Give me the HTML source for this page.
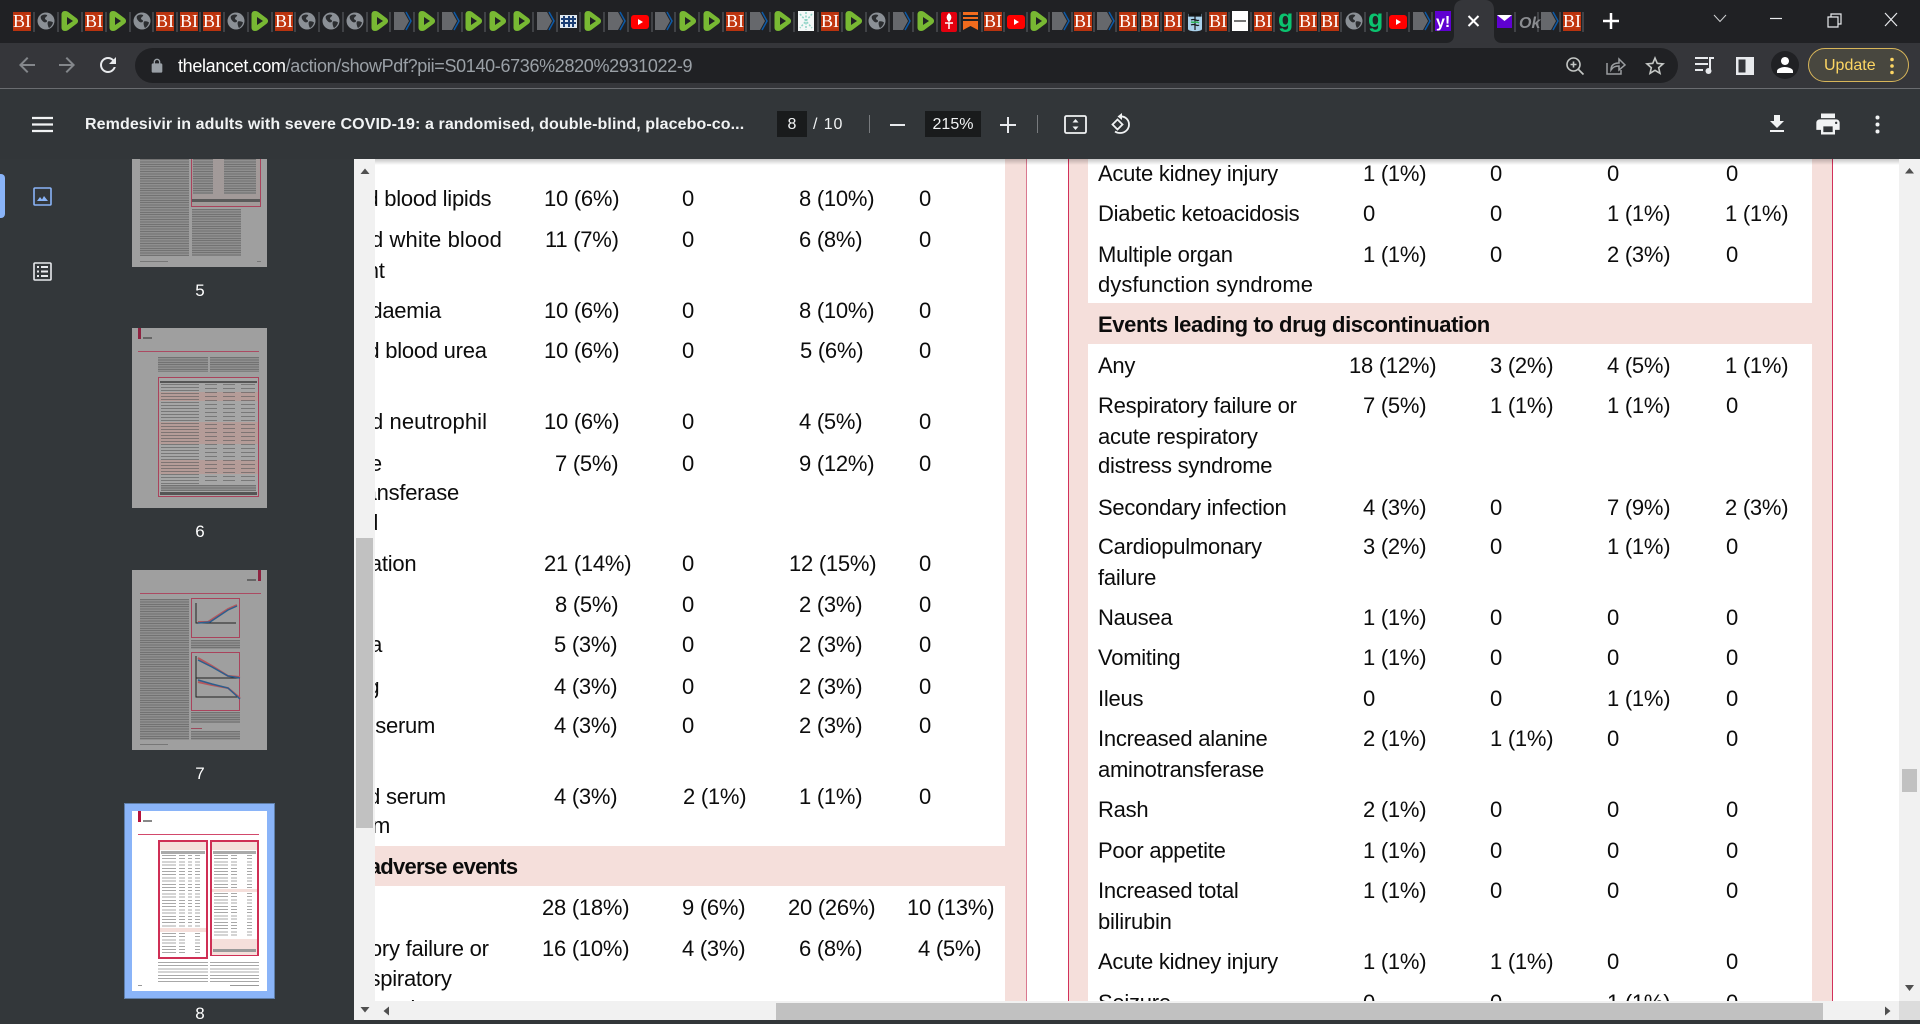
<!DOCTYPE html>
<html><head><meta charset="utf-8"><title>Remdesivir</title>
<style>
html,body{margin:0;padding:0;width:1920px;height:1020px;overflow:hidden;background:#323639;font-family:"Liberation Sans",sans-serif}
#tabs{position:absolute;left:0;top:0;width:1920px;height:43px;background:#202124}
#bar{position:absolute;left:0;top:43px;width:1920px;height:45px;background:#35363a}
#addr{position:absolute;left:135px;top:48px;width:1543px;height:35px;border-radius:18px;background:#202124}
#sep{position:absolute;left:0;top:88px;width:1920px;height:1px;background:#6a6c70}
#pdfbar{position:absolute;left:0;top:89px;width:1920px;height:70px;background:#323639}
.B{position:absolute;top:12px;width:18px;height:19px;background:#c0360f;color:#fff;font:18px/19px "Liberation Serif",serif;text-align:center;font-style:normal;overflow:hidden;box-shadow:inset 0 2px #b8330f,inset 0 -2px #b8330f}
.abs{position:absolute;white-space:nowrap}
svg.i{position:absolute;overflow:visible}
#side{position:absolute;left:0;top:159px;width:354px;height:861px;background:#33373a}
.pg{position:absolute;left:132px;width:135px;background:#9f9f9f;overflow:hidden}
.pg>*{filter:blur(.35px)}
.n{position:absolute;width:40px;left:180px;text-align:center;color:#fff;font-size:17px;line-height:20px}
.l{position:absolute;background:repeating-linear-gradient(#727272 0 1px,#8f8f8f 1px 2.4px)}
.w .l{background:repeating-linear-gradient(#a8a8a8 0 1px,rgba(255,255,255,0) 1px 3.2px)}
.tb{position:absolute;border:1.5px solid #a9435c;box-sizing:border-box}
.w .tb{border:2px solid #cf2f55}
.pk{position:absolute;left:0;right:0;background:#b59c98}
.w .pk{background:#f5dfdb}
.pl{position:absolute;height:1px;background:#ab4a62}
.w .pl{background:#d2496b}
.bar{position:absolute;width:3px;height:11px;background:#8e2340}
.w .bar{background:#b5123c}
#main{position:absolute;left:0;top:0;width:1920px;height:1020px;clip-path:inset(159px 21px 19px 375px);background:#fff}
.r{position:absolute;left:0;top:0;margin-top:1px;width:1920px;height:30px;font-size:22px;line-height:30px;letter-spacing:-.25px;color:#0c0c0c}
.r span{position:absolute;white-space:nowrap}
.r b{position:absolute;white-space:nowrap;letter-spacing:-.45px}
.a{left:1363px}.b{left:1490px}.c{left:1607px}.d{left:1726px}
.e{left:544px}.f{left:682px}.g{left:799px}.h{left:919px}.lb{left:1098px}
.vs{position:absolute;background:#f1f1f1}
.th{position:absolute;background:#c1c1c1}
</style></head><body>

<div id="tabs"></div>
<i class="B" style="left:13px">BI</i><i class="B" style="left:85px">BI</i><i class="B" style="left:156px">BI</i><i class="B" style="left:180px">BI</i><i class="B" style="left:203px">BI</i><i class="B" style="left:275px">BI</i><i class="B" style="left:726px">BI</i><i class="B" style="left:821px">BI</i><i class="B" style="left:984px">BI</i><i class="B" style="left:1074px">BI</i><i class="B" style="left:1119px">BI</i><i class="B" style="left:1141px">BI</i><i class="B" style="left:1164px">BI</i><i class="B" style="left:1209px">BI</i><i class="B" style="left:1254px">BI</i><i class="B" style="left:1299px">BI</i><i class="B" style="left:1321px">BI</i><i class="B" style="left:1563px">BI</i>

<svg class="i" style="left:0;top:0" width="1920" height="43" viewBox="0 0 1920 43">
<defs>
<symbol id="dd" viewBox="0 0 18 20" width="18" height="20"><path d="M4 0C1.800 0 .5 1.400.5 3.500v13C.5 18.600 1.800 20 4 20c1.200 0 2.300-.4 3.400-1.100l8-6c2.200-1.600 2.200-4.200 0-5.800l-8-6C6.300.4 5.200 0 4 0z" fill="#78b833"/><path d="M6 6v8l6-4z" fill="#202124"/></symbol>
<symbol id="gl" viewBox="0 0 18 18" width="18" height="18"><circle cx="9" cy="9" r="8.500" fill="#8b9096"/><path d="M4 4c2-1.500 4-2 6-1 1 1-2 2-2 3.500 0 1.500 2 1 2 2.500S7.500 11 6 9.500 3 6 4 4zM11 9.500c2-.5 4 0 5 1-.5 2-2 4.500-4 5.500-1-1.500-2-5-1-6.500z" fill="#2b2d30"/></symbol>
<symbol id="ch" viewBox="0 0 18 20" width="18" height="20"><path d="M0 1h10l5 9-5 9H0z" fill="#66686c"/><path d="M12 1l5 9-5 9" fill="none" stroke="#0d5aa7" stroke-width="1.500"/></symbol>
<symbol id="yt" viewBox="0 0 18 14" width="18" height="14"><rect width="18" height="14" rx="3" fill="#f00"/><path d="M7 4v6l5-3z" fill="#fff"/></symbol>
</defs>
<path d="M34 12v20M58 12v20M82 12v20M106 12v20M130 12v20M153 12v20M177 12v20M200 12v20M224 12v20M248 12v20M272 12v20M295 12v20M319 12v20M343 12v20M367 12v20M390 12v20M414 12v20M438 12v20M462 12v20M485 12v20M509 12v20M533 12v20M557 12v20M580 12v20M604 12v20M628 12v20M652 12v20M675 12v20M699 12v20M723 12v20M746 12v20M770 12v20M794 12v20M818 12v20M842 12v20M866 12v20M889 12v20M913 12v20M937 12v20M960 12v20M982 12v20M1004 12v20M1027 12v20M1049 12v20M1072 12v20M1094 12v20M1116 12v20M1139 12v20M1161 12v20M1184 12v20M1206 12v20M1229 12v20M1251 12v20M1274 12v20M1297 12v20M1319 12v20M1341 12v20M1365 12v20M1387 12v20M1409 12v20M1432 12v20M1515 12v20M1538 12v20M1560 12v20M1583 12v20" stroke="#5f6368" stroke-width="1"/>
<use href="#gl" x="37" y="12"/><use href="#gl" x="133" y="12"/><use href="#gl" x="227" y="12"/><use href="#gl" x="298" y="12"/><use href="#gl" x="322" y="12"/><use href="#gl" x="346" y="12"/><use href="#gl" x="868" y="12"/><use href="#gl" x="1345" y="12"/>
<use href="#dd" x="61" y="11"/><use href="#dd" x="109" y="11"/><use href="#dd" x="251" y="11"/><use href="#dd" x="371" y="11"/><use href="#dd" x="418" y="11"/><use href="#dd" x="465" y="11"/><use href="#dd" x="489" y="11"/><use href="#dd" x="513" y="11"/><use href="#dd" x="584" y="11"/><use href="#dd" x="679" y="11"/><use href="#dd" x="703" y="11"/><use href="#dd" x="774" y="11"/><use href="#dd" x="845" y="11"/><use href="#dd" x="917" y="11"/><use href="#dd" x="1030" y="11"/>
<use href="#ch" x="394" y="11"/><use href="#ch" x="442" y="11"/><use href="#ch" x="537" y="11"/><use href="#ch" x="608" y="11"/><use href="#ch" x="655" y="11"/><use href="#ch" x="750" y="11"/><use href="#ch" x="893" y="11"/><use href="#ch" x="1052" y="11"/><use href="#ch" x="1097" y="11"/><use href="#ch" x="1413" y="11"/><use href="#ch" x="1541" y="11"/>
<use href="#yt" x="631" y="15"/><use href="#yt" x="1007" y="15"/><use href="#yt" x="1389" y="15"/>
<rect x="560" y="15" width="17" height="13" fill="#dfe8ef"/><path d="M561 19h15M561 23h15M564 16v11M569 16v11M573 16v11" stroke="#1a3d73" stroke-width="2"/>
<rect x="798" y="11" width="16" height="20" fill="#f4f8f8"/><path d="M800 14l12 14M812 14l-12 14M806 12v18" stroke="#8ed3c6" stroke-width="1.500" stroke-dasharray="2 1.500"/>
<rect x="941" y="12" width="16" height="20" rx="2" fill="#e3000f"/><path d="M949 14c2 2 2.500 4 0 7-2.500-3-2-5 0-7zM945 23h8M949 23v6" stroke="#fff" fill="#fff" stroke-width="1.500"/>
<path d="M963 12h15v3h-15zM963 17h15v2h-15zM963 21h15v9l-7.500-4-7.500 4z" fill="#f26b1d"/>
<path d="M1188 14c0-1 14-1 14 0v15c0 3-14 3-14 0z" fill="#a9d0ea"/><path d="M1189 13h12v3h-12zM1195 15v15M1191 20c4-2 6 2 8 0M1191 25c4-2 6 2 8 0" stroke="#16191c" fill="#111" stroke-width="1.200"/><path d="M1191 22c4 1 6-1 8 1" stroke="#2fb45a" fill="none" stroke-width="1.500"/>
<rect x="1232" y="11" width="16" height="20" fill="#fff"/><rect x="1234" y="20" width="12" height="2" fill="#777"/>
<text x="1278" y="27" font-family="Liberation Sans,sans-serif" font-weight="bold" font-size="25" fill="#0bc26f">g</text>
<text x="1368" y="27" font-family="Liberation Sans,sans-serif" font-weight="bold" font-size="25" fill="#0bc26f">g</text>
<rect x="1435" y="11" width="16" height="20" fill="#5f01d1"/><text x="1436" y="27" font-family="Liberation Sans,sans-serif" font-weight="bold" font-size="16" fill="#fff">y!</text>
<path d="M1446 43c5 0 8-3 8-8V10c0-6 3-10 9-10h22c6 0 9 4 9 10v25c0 5 3 8 8 8z" fill="#35363a"/>
<path d="M1468.500 16l10 10M1478.500 16l-10 10" stroke="#fff" stroke-width="2"/>
<rect x="1497" y="15" width="15" height="13" fill="#5f01d1"/><path d="M1497 15h15l-7.500 6z" fill="#fff"/>
<text x="1519" y="28" font-family="Liberation Sans,sans-serif" font-style="italic" font-weight="bold" font-size="16" fill="#8a8c90">Ok</text>
<path d="M1603 21h16M1611 13v16" stroke="#fff" stroke-width="2.500"/>
<path d="M1714 15l6 6.500 6-6.500" fill="none" stroke="#d0d2d4"/>
<path d="M1770 18.500h12" stroke="#e8eaed" stroke-width="1.200"/>
<path d="M1828 17h10v10h-10zM1831 17v-3h10v10h-3" fill="none" stroke="#e8eaed" stroke-width="1.200"/>
<path d="M1885 13l12 13M1897 13l-12 13" stroke="#e8eaed" stroke-width="1.200"/>
</svg>

<div id="bar"></div><div id="addr"></div><div id="sep"></div>
<svg class="i" style="left:15px;top:53px" width="24" height="24" viewBox="0 0 24 24"><path fill="#84878b" d="M20 11H7.830l5.590-5.590L12 4l-8 8 8 8 1.410-1.410L7.830 13H20v-2z"/></svg>
<svg class="i" style="left:55px;top:53px" width="24" height="24" viewBox="0 0 24 24"><path fill="#84878b" d="M12 4l-1.410 1.410L16.170 11H4v2h12.170l-5.580 5.590L12 20l8-8z"/></svg>
<svg class="i" style="left:96px;top:53px" width="24" height="24" viewBox="0 0 24 24"><path fill="#e8eaed" d="M17.650 6.350C16.200 4.900 14.210 4 12 4c-4.420 0-7.990 3.580-7.990 8s3.570 8 7.990 8c3.730 0 6.840-2.550 7.730-6h-2.080c-.82 2.330-3.040 4-5.650 4-3.310 0-6-2.690-6-6s2.690-6 6-6c1.660 0 3.140.69 4.220 1.780L13 11h7V4l-2.350 2.350z"/></svg>
<svg class="i" style="left:149px;top:58px" width="16" height="16" viewBox="0 0 24 24"><path fill="#9aa0a6" d="M18 8h-1V6c0-2.760-2.240-5-5-5S7 3.240 7 6v2H6c-1.100 0-2 .9-2 2v10c0 1.100.9 2 2 2h12c1.100 0 2-.9 2-2V10c0-1.100-.9-2-2-2zM9 8V6c0-1.660 1.340-3 3-3s3 1.340 3 3v2H9z"/></svg>
<div class="abs" style="left:178px;top:54px;font-size:18px;line-height:24px;color:#fff;letter-spacing:-.34px">thelancet.com<span style="color:#9aa0a6">/action/showPdf?pii=S0140-6736%2820%2931022-9</span></div>
<svg class="i" style="left:1564px;top:55px" width="22" height="22" viewBox="0 0 22 22"><circle cx="9.500" cy="9.500" r="6.500" fill="none" stroke="#c4c7c5" stroke-width="1.600"/><path d="M14.500 14.500l5 5M6.500 9.500h6M9.500 6.500v6" stroke="#c4c7c5" stroke-width="1.600"/></svg>
<svg class="i" style="left:1604px;top:55px" width="22" height="22" viewBox="0 0 22 22"><path d="M3 8v11h14v-4" fill="none" stroke="#9a9da0" stroke-width="1.500"/><path d="M7 15c0-5 3-7 8-7V4l6 6-6 5v-4c-4 0-6 1-8 4z" fill="none" stroke="#9a9da0" stroke-width="1.500"/></svg>
<svg class="i" style="left:1643px;top:54px" width="24" height="24" viewBox="0 0 24 24"><path fill="#c4c7c5" d="M22 9.240l-7.190-.62L12 2 9.190 8.630 2 9.240l5.460 4.730L5.820 21 12 17.270 18.180 21l-1.630-7.030L22 9.240zM12 15.400l-3.760 2.270 1-4.280-3.320-2.880 4.380-.38L12 6.100l1.710 4.040 4.380.38-3.320 2.880 1 4.280L12 15.400z"/></svg>
<svg class="i" style="left:1694px;top:56px" width="22" height="20" viewBox="0 0 22 20"><path d="M1 2h13M1 8h13M1 14h8" stroke="#e8eaed" stroke-width="2"/><path d="M16 15V2h4" fill="none" stroke="#e8eaed" stroke-width="2"/><circle cx="14.500" cy="15" r="3" fill="#e8eaed"/></svg>
<svg class="i" style="left:1736px;top:57px" width="18" height="18" viewBox="0 0 18 18"><path fill="#e8eaed" fill-rule="evenodd" d="M0 0h18v18H0zM2.500 2.500v13h7v-13z"/></svg>
<div class="abs" style="left:1771px;top:51px;width:28px;height:28px;border-radius:50%;background:#202124"></div>
<svg class="i" style="left:1773px;top:53px" width="24" height="24" viewBox="0 0 24 24"><path fill="#fff" d="M12 12c2.210 0 4-1.790 4-4s-1.790-4-4-4-4 1.790-4 4 1.790 4 4 4zm0 2c-2.670 0-8 1.340-8 4v2h16v-2c0-2.660-5.330-4-8-4z"/></svg>
<div class="abs" style="left:1808px;top:48px;width:101px;height:34px;box-sizing:border-box;border:1.500px solid #d8b65a;border-radius:17px;background:#48473f"></div>
<div class="abs" style="left:1824px;top:54px;font-size:16px;line-height:24px;color:#fdd663">Update</div>
<svg class="i" style="left:1889px;top:57px" width="6" height="18" viewBox="0 0 6 18"><circle cx="3" cy="2.500" r="1.800" fill="#fdd663"/><circle cx="3" cy="9" r="1.800" fill="#fdd663"/><circle cx="3" cy="15.500" r="1.800" fill="#fdd663"/></svg>

<div id="pdfbar"></div>
<svg class="i" style="left:32px;top:116px" width="21" height="17" viewBox="0 0 21 17"><path d="M0 2h21M0 8.500h21M0 15h21" stroke="#f1f3f4" stroke-width="2.200"/></svg>
<div class="abs" style="left:85px;top:113px;font-size:16px;line-height:24px;font-weight:bold;color:#f1f3f4;width:662px;letter-spacing:.09px">Remdesivir in adults with severe COVID-19: a randomised, double-blind, placebo-co...</div>
<div class="abs" style="left:777px;top:111px;width:30px;height:26px;background:#191b1c;color:#f1f3f4;font-size:16px;line-height:27px;text-align:center">8</div>
<div class="abs" style="left:813px;top:111px;color:#f1f3f4;font-size:16px;line-height:27px;letter-spacing:.9px">/ 10</div>
<div class="abs" style="left:869px;top:115px;width:1px;height:18px;background:#787b7e"></div>
<div class="abs" style="left:890px;top:124px;width:15px;height:2px;background:#e8eaed"></div>
<div class="abs" style="left:925px;top:111px;width:56px;height:26px;background:#191b1c;color:#f1f3f4;font-size:16px;line-height:27px;text-align:center">215%</div>
<svg class="i" style="left:1000px;top:117px" width="16" height="16" viewBox="0 0 16 16"><path d="M0 8h16M8 0v16" stroke="#e8eaed" stroke-width="2"/></svg>
<div class="abs" style="left:1037px;top:115px;width:1px;height:18px;background:#787b7e"></div>
<svg class="i" style="left:1064px;top:115px" width="23" height="19" viewBox="0 0 23 19"><rect x="1" y="1" width="21" height="17" rx="1.500" fill="none" stroke="#f1f3f4" stroke-width="1.800"/><path d="M11.500 4l3 3.500h-6zM11.500 15l3-3.500h-6z" fill="#f1f3f4"/></svg>
<svg class="i" style="left:1108px;top:112px" width="24" height="24" viewBox="0 0 24 24"><path d="M9.500 7.500l5 5-5 5-5-5z" fill="none" stroke="#f1f3f4" stroke-width="1.800"/><path d="M12 4.500c5-.5 9 3 9 8s-4 8.500-9 8.500c-2 0-3.500-.5-5-1.500" fill="none" stroke="#f1f3f4" stroke-width="1.800"/><path d="M14 1v7l-4.500-3.500z" fill="#f1f3f4"/></svg>
<svg class="i" style="left:1765px;top:112px" width="24" height="24" viewBox="0 0 24 24"><path fill="#f1f3f4" d="M19 9h-4V3H9v6H5l7 7 7-7zM5 18v2h14v-2H5z"/></svg>
<svg class="i" style="left:1814px;top:110px" width="28" height="28" viewBox="0 0 24 24"><path fill="#f1f3f4" d="M19 8H5c-1.660 0-3 1.340-3 3v6h4v4h12v-4h4v-6c0-1.660-1.340-3-3-3zm-3 11H8v-5h8v5zm3-7c-.55 0-1-.45-1-1s.45-1 1-1 1 .45 1 1-.45 1-1 1zm-1-9H6v4h12V3z"/></svg>
<svg class="i" style="left:1874px;top:115px" width="7" height="19" viewBox="0 0 7 19"><circle cx="3.500" cy="2.500" r="2" fill="#f1f3f4"/><circle cx="3.500" cy="9.500" r="2" fill="#f1f3f4"/><circle cx="3.500" cy="16.500" r="2" fill="#f1f3f4"/></svg>

<div id="side"></div>
<div class="abs" style="left:0;top:174px;width:5px;height:44px;background:#8ab4f8;border-radius:0 4px 4px 0"></div>
<svg class="i" style="left:33px;top:187px" width="19" height="19" viewBox="0 0 19 19"><rect x="1" y="1" width="17" height="17" rx="1" fill="none" stroke="#8ab4f8" stroke-width="1.600"/><path d="M4 14l3-4 2 2.500 2-3.500 4 5z" fill="#8ab4f8"/></svg>
<svg class="i" style="left:33px;top:262px" width="19" height="19" viewBox="0 0 19 19"><rect x="1" y="1" width="17" height="17" rx="1" fill="none" stroke="#e8eaed" stroke-width="1.600"/><path d="M4 5h2M4 9.500h2M4 14h2M8 5h7M8 9.500h7M8 14h7" stroke="#e8eaed" stroke-width="2"/></svg>

<div class="pg" style="top:159px;height:108px">
<div class="l" style="left:8px;top:0;width:49px;height:97px"></div>
<div class="tb" style="left:59px;top:-30px;width:70px;height:78px;background:#a29a99"></div>
<div class="l" style="left:61px;top:0;width:20px;height:35px"></div>
<div class="l" style="left:92px;top:0;width:32px;height:35px"></div>
<div class="abs" style="left:60px;top:40px;width:68px;height:3px;background:#5a5a5a"></div>
<div class="l" style="left:60px;top:50px;width:49px;height:47px"></div>
<div class="abs" style="left:8px;top:102px;width:28px;height:1px;background:#777"></div>
<div class="abs" style="left:125px;top:102px;width:4px;height:1px;background:#777"></div>
</div>
<div class="n" style="top:281px">5</div>

<div class="pg" style="top:328px;height:180px">
<div class="bar" style="left:6px;top:0"></div>
<div class="abs" style="left:11px;top:9px;width:9px;height:2px;background:#666"></div>
<div class="pl" style="left:6px;top:23px;width:121px"></div>
<div class="l" style="left:26px;top:29px;width:50px;height:15px"></div>
<div class="l" style="left:78px;top:29px;width:49px;height:15px"></div>
<div class="tb" style="left:26px;top:49px;width:101px;height:120px;background:#a6a6a6">
<div class="abs" style="left:1px;right:1px;top:3px;height:2px;background:#555"></div>
<div class="pk" style="top:14px;height:9px"></div><div class="pk" style="top:44px;height:22px"></div><div class="pk" style="top:82px;height:14px"></div>
<div class="l" style="left:2px;top:6px;width:38px;height:100px;background:repeating-linear-gradient(rgba(90,90,90,.6) 0 1px,rgba(0,0,0,0) 1px 3px)"></div>
<div class="l" style="left:46px;top:6px;width:12px;height:100px;background:repeating-linear-gradient(rgba(90,90,90,.6) 0 1px,rgba(0,0,0,0) 1px 4px)"></div>
<div class="l" style="left:64px;top:6px;width:12px;height:100px;background:repeating-linear-gradient(rgba(90,90,90,.6) 0 1px,rgba(0,0,0,0) 1px 4px)"></div>
<div class="l" style="left:82px;top:6px;width:14px;height:100px;background:repeating-linear-gradient(rgba(90,90,90,.6) 0 1px,rgba(0,0,0,0) 1px 4px)"></div>
<div class="l" style="left:2px;top:107px;width:95px;height:6px"></div>
<div class="abs" style="left:1px;right:1px;top:114px;height:3px;background:#555"></div>
</div>
<div class="abs" style="left:138px;top:502px;width:4px;height:1px;background:#777"></div>
<div class="abs" style="left:230px;top:502px;width:29px;height:1px;background:#777"></div>
</div>
<div class="n" style="top:522px">6</div>

<div class="pg" style="top:570px;height:180px">
<div class="bar" style="left:126px;top:0"></div>
<div class="abs" style="left:115px;top:9px;width:9px;height:2px;background:#666"></div>
<div class="pl" style="left:8px;top:23px;width:121px"></div>
<div class="l" style="left:8px;top:29px;width:49px;height:141px"></div>
<div class="tb" style="left:59px;top:28px;width:49px;height:40px"></div>
<div class="l" style="left:59px;top:70px;width:49px;height:9px"></div>
<div class="tb" style="left:59px;top:82px;width:49px;height:59px"></div>
<div class="l" style="left:59px;top:142px;width:49px;height:11px"></div>
<div class="abs" style="left:59px;top:158px;width:11px;height:1px;background:#9a4a5c"></div>
<div class="l" style="left:59px;top:161px;width:49px;height:9px"></div>
<svg class="i" style="left:0;top:0" width="135" height="180" viewBox="0 0 135 180"><path d="M64 33v20h40" fill="none" stroke="#222" stroke-width="1"/><path d="M66 52l10 0 20-13 9-4" fill="none" stroke="#b5575c" stroke-width="2"/><path d="M66 53l12-1 18-12 9-4" fill="none" stroke="#2c5f8e" stroke-width="1.500"/><path d="M64 86v22h44M64 107v20h44" fill="none" stroke="#222" stroke-width="1"/><path d="M66 88l14 8 16 10 12 1" fill="none" stroke="#b5575c" stroke-width="2"/><path d="M66 90l14 7 16 9 12 2" fill="none" stroke="#2c5f8e" stroke-width="1.500"/><path d="M66 112l14 3 16 3 12 10" fill="none" stroke="#b5575c" stroke-width="2"/><path d="M66 110l14 4 16 4 12 11" fill="none" stroke="#2c5f8e" stroke-width="1.500"/></svg>
<div class="abs" style="left:8px;top:174px;width:28px;height:1px;background:#777"></div>
</div>
<div class="n" style="top:764px">7</div>

<div class="abs" style="left:124px;top:803px;width:151px;height:196px;background:#8ab4f8;box-sizing:border-box;border:1px solid #5f7ea8"></div>
<div class="pg w" style="top:811px;height:180px;background:#fff">
<div class="bar" style="left:6px;top:0"></div>
<div class="abs" style="left:11px;top:9px;width:9px;height:2px;background:#888"></div>
<div class="pl" style="left:6px;top:23px;width:121px"></div>
<div class="tb" style="left:26px;top:29px;width:50px;height:119px">
<div class="pk" style="top:0;height:8px"></div><div class="abs" style="left:1px;right:1px;top:9px;height:3px;background:#aaa"></div>
<div class="l" style="left:2px;top:13px;width:14px;height:72px"></div><div class="l" style="left:19px;top:13px;width:6px;height:72px"></div><div class="l" style="left:28px;top:13px;width:4px;height:72px"></div><div class="l" style="left:35px;top:13px;width:5px;height:72px"></div><div class="pk" style="top:86px;height:4px"></div><div class="l" style="left:2px;top:91px;width:14px;height:22px"></div><div class="l" style="left:19px;top:91px;width:6px;height:22px"></div><div class="l" style="left:35px;top:91px;width:5px;height:22px"></div></div>
<div class="tb" style="left:78px;top:29px;width:49px;height:116px">
<div class="pk" style="top:0;height:8px"></div><div class="abs" style="left:1px;right:1px;top:9px;height:3px;background:#aaa"></div>
<div class="l" style="left:2px;top:13px;width:14px;height:34px"></div><div class="l" style="left:19px;top:13px;width:6px;height:34px"></div><div class="l" style="left:35px;top:13px;width:5px;height:34px"></div><div class="pk" style="top:47px;height:3px"></div><div class="l" style="left:2px;top:51px;width:14px;height:44px"></div><div class="l" style="left:19px;top:51px;width:6px;height:44px"></div><div class="l" style="left:35px;top:51px;width:5px;height:44px"></div><div class="pk" style="top:97px;height:16px"></div><div class="abs" style="left:1px;right:1px;top:107px;height:3px;background:#999"></div></div>
<div class="l" style="left:26px;top:151px;width:50px;height:20px"></div>
<div class="l" style="left:78px;top:151px;width:49px;height:20px"></div>
<div class="abs" style="left:6px;top:174px;width:4px;height:1px;background:#999"></div>
<div class="abs" style="left:98px;top:174px;width:29px;height:1px;background:#999"></div>
</div>
<div class="n" style="top:1004px">8</div>

<div id="main">
<div class="abs" style="left:375px;top:159px;width:630px;height:842px;background:#fff"></div>
<div class="abs" style="left:375px;top:846px;width:650px;height:40px;background:#f5dfdb"></div>
<div class="abs" style="left:1005px;top:159px;width:21px;height:842px;background:#f5dfdb"></div>
<div class="abs" style="left:1026px;top:159px;width:1px;height:842px;background:#d9788f"></div>
<div class="abs" style="left:1068px;top:159px;width:1px;height:842px;background:#d2305a"></div>
<div class="abs" style="left:1069px;top:159px;width:19px;height:842px;background:#f5dfdb"></div>
<div class="abs" style="left:1812px;top:159px;width:20px;height:842px;background:#f5dfdb"></div>
<div class="abs" style="left:1832px;top:159px;width:1px;height:842px;background:#d2305a"></div>
<div class="abs" style="left:1088px;top:303px;width:724px;height:41px;background:#f5dfdb"></div>

<div class="r" style="top:183px"><span style="left:284px">Increased blood lipids</span><span class="e">10 (6%)</span><span class="f">0</span><span class="g">8 (10%)</span><span class="h">0</span></div>
<div class="r" style="top:224px"><span style="left:276px;letter-spacing:.1px">Decreased white blood</span><span style="left:545px">11 (7%)</span><span class="f">0</span><span class="g">6 (8%)</span><span class="h">0</span></div>
<div class="r" style="top:255px"><span style="left:332px">count</span></div>
<div class="r" style="top:295px"><span style="left:287px">Hyperlipidaemia</span><span class="e">10 (6%)</span><span class="f">0</span><span class="g">8 (10%)</span><span class="h">0</span></div>
<div class="r" style="top:335px"><span style="left:285px">Increased blood urea</span><span class="e">10 (6%)</span><span class="f">0</span><span style="left:800px">5 (6%)</span><span class="h">0</span></div>
<div class="r" style="top:406px"><span style="left:276px;letter-spacing:.1px">Decreased neutrophil</span><span class="e">10 (6%)</span><span class="f">0</span><span class="g">4 (5%)</span><span class="h">0</span></div>
<div class="r" style="top:448px"><span style="left:290px">Aspartate</span><span style="left:555px">7 (5%)</span><span class="f">0</span><span class="g">9 (12%)</span><span class="h">0</span></div>
<div class="r" style="top:477px"><span style="left:293px">aminotransferase</span></div>
<div class="r" style="top:507px"><span style="left:285px">increased</span></div>
<div class="r" style="top:548px"><span style="left:297px">Constipation</span><span class="e">21 (14%)</span><span class="f">0</span><span style="left:789px">12 (15%)</span><span class="h">0</span></div>
<div class="r" style="top:589px"><span style="left:555px">8 (5%)</span><span class="f">0</span><span class="g">2 (3%)</span><span class="h">0</span></div>
<div class="r" style="top:629px"><span style="left:297px">Anaemia</span><span style="left:554px">5 (3%)</span><span class="f">0</span><span class="g">2 (3%)</span><span class="h">0</span></div>
<div class="r" style="top:671px"><span style="left:297px">Vomiting</span><span style="left:554px">4 (3%)</span><span class="f">0</span><span class="g">2 (3%)</span><span class="h">0</span></div>
<div class="r" style="top:710px"><span style="left:275px">Increased serum</span><span style="left:554px">4 (3%)</span><span class="f">0</span><span class="g">2 (3%)</span><span class="h">0</span></div>
<div class="r" style="top:781px"><span style="left:276px">Decreased serum</span><span style="left:554px">4 (3%)</span><span style="left:683px">2 (1%)</span><span class="g">1 (1%)</span><span class="h">0</span></div>
<div class="r" style="top:810px"><span style="left:292px">potassium</span></div>
<div class="r" style="top:851px"><b style="left:288px;letter-spacing:-.75px">Serious adverse events</b></div>
<div class="r" style="top:892px"><span style="left:542px">28 (18%)</span><span class="f">9 (6%)</span><span style="left:788px">20 (26%)</span><span style="left:907px">10 (13%)</span></div>
<div class="r" style="top:933px"><span style="left:290px">Respiratory failure or</span><span style="left:542px">16 (10%)</span><span class="f">4 (3%)</span><span class="g">6 (8%)</span><span style="left:918px">4 (5%)</span></div>
<div class="r" style="top:963px"><span style="left:292px">acute respiratory</span></div>
<div class="r" style="top:993px"><span style="left:290px">distress syndrome</span></div>

<div class="r" style="top:158px"><span class="lb">Acute kidney injury</span><span class="a">1 (1%)</span><span class="b">0</span><span class="c">0</span><span class="d">0</span></div>
<div class="r" style="top:198px"><span class="lb">Diabetic ketoacidosis</span><span class="a">0</span><span class="b">0</span><span class="c">1 (1%)</span><span style="left:1725px">1 (1%)</span></div>
<div class="r" style="top:239px"><span class="lb">Multiple organ</span><span class="a">1 (1%)</span><span class="b">0</span><span class="c">2 (3%)</span><span class="d">0</span></div>
<div class="r" style="top:269px"><span class="lb" style="letter-spacing:.05px">dysfunction syndrome</span></div>
<div class="r" style="top:309px"><b class="lb" style="letter-spacing:-.4px">Events leading to drug discontinuation</b></div>
<div class="r" style="top:350px"><span class="lb">Any</span><span style="left:1349px">18 (12%)</span><span class="b">3 (2%)</span><span class="c">4 (5%)</span><span style="left:1725px">1 (1%)</span></div>
<div class="r" style="top:390px"><span class="lb">Respiratory failure or</span><span class="a">7 (5%)</span><span class="b">1 (1%)</span><span class="c">1 (1%)</span><span class="d">0</span></div>
<div class="r" style="top:421px"><span class="lb">acute respiratory</span></div>
<div class="r" style="top:450px"><span class="lb">distress syndrome</span></div>
<div class="r" style="top:492px"><span class="lb">Secondary infection</span><span class="a">4 (3%)</span><span class="b">0</span><span class="c">7 (9%)</span><span style="left:1725px">2 (3%)</span></div>
<div class="r" style="top:531px"><span class="lb">Cardiopulmonary</span><span class="a">3 (2%)</span><span class="b">0</span><span class="c">1 (1%)</span><span class="d">0</span></div>
<div class="r" style="top:562px"><span class="lb">failure</span></div>
<div class="r" style="top:602px"><span class="lb">Nausea</span><span class="a">1 (1%)</span><span class="b">0</span><span class="c">0</span><span class="d">0</span></div>
<div class="r" style="top:642px"><span class="lb">Vomiting</span><span class="a">1 (1%)</span><span class="b">0</span><span class="c">0</span><span class="d">0</span></div>
<div class="r" style="top:683px"><span class="lb">Ileus</span><span class="a">0</span><span class="b">0</span><span class="c">1 (1%)</span><span class="d">0</span></div>
<div class="r" style="top:723px"><span class="lb">Increased alanine</span><span class="a">2 (1%)</span><span class="b">1 (1%)</span><span class="c">0</span><span class="d">0</span></div>
<div class="r" style="top:754px"><span class="lb">aminotransferase</span></div>
<div class="r" style="top:794px"><span class="lb">Rash</span><span class="a">2 (1%)</span><span class="b">0</span><span class="c">0</span><span class="d">0</span></div>
<div class="r" style="top:835px"><span class="lb">Poor appetite</span><span class="a">1 (1%)</span><span class="b">0</span><span class="c">0</span><span class="d">0</span></div>
<div class="r" style="top:875px"><span class="lb">Increased total</span><span class="a">1 (1%)</span><span class="b">0</span><span class="c">0</span><span class="d">0</span></div>
<div class="r" style="top:906px"><span class="lb">bilirubin</span></div>
<div class="r" style="top:946px"><span class="lb">Acute kidney injury</span><span class="a">1 (1%)</span><span class="b">1 (1%)</span><span class="c">0</span><span class="d">0</span></div>
<div class="r" style="top:987px"><span class="lb">Seizure</span><span class="a">0</span><span class="b">0</span><span class="c">1 (1%)</span><span class="d">0</span></div>
</div>

<div class="abs" style="left:375px;top:159px;width:1524px;height:6px;background:linear-gradient(rgba(0,0,0,.22),rgba(0,0,0,0))"></div>

<div class="vs" style="left:354px;top:159px;width:21px;height:861px"></div>
<div class="th" style="left:356px;top:538px;width:17px;height:290px"></div>
<svg class="i" style="left:354px;top:159px" width="21" height="861" viewBox="0 0 21 861"><path d="M6.500 15h9L11 9.500zM6.500 848h9L11 853.500z" fill="#505050"/></svg>
<div class="vs" style="left:375px;top:1001px;width:1524px;height:19px"></div>
<div class="th" style="left:776px;top:1003px;width:1047px;height:17px"></div>
<svg class="i" style="left:375px;top:1001px" width="1524" height="19" viewBox="0 0 1524 19"><path d="M14 5.500v9L8.500 10zM1510 5.500v9l5.500-4.500z" fill="#505050"/></svg>
<div class="vs" style="left:1899px;top:159px;width:21px;height:861px"></div>
<div class="abs" style="left:1899px;top:1001px;width:21px;height:19px;background:#dcdcdc"></div>
<div class="th" style="left:1902px;top:769px;width:15px;height:23px"></div>
<svg class="i" style="left:1899px;top:159px" width="21" height="842" viewBox="0 0 21 842"><path d="M6 14.500h9L10.500 9zM6 826h9l-4.500 6z" fill="#505050"/></svg>
</body></html>
